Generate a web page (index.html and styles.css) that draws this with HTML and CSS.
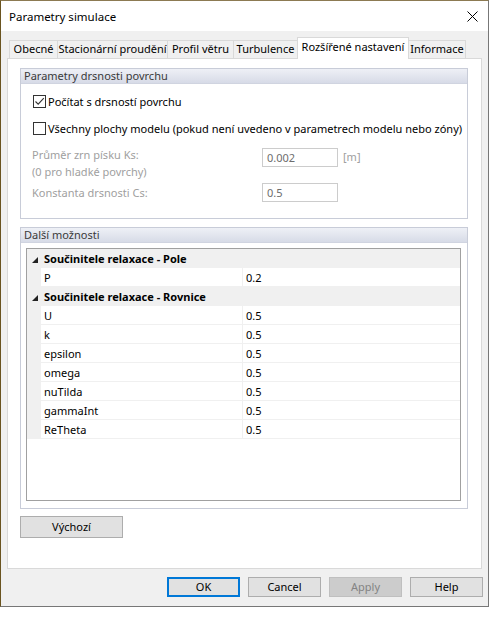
FILE: index.html
```html
<!DOCTYPE html>
<html lang="cs">
<head>
<meta charset="utf-8">
<title>Parametry simulace</title>
<link rel="stylesheet" href="styles.css">
</head>
<body>
<div class="window">
  <div class="titlebar">
    <span class="title">Parametry simulace</span>
    <svg class="close" width="11" height="11" viewBox="0 0 11 11"><path d="M0.5 0.5 L10.5 10.5 M10.5 0.5 L0.5 10.5" stroke="#000" stroke-width="1" fill="none"/></svg>
  </div>
  <div class="client">
    <div class="tabs">
      <div class="tab t1">Obecné</div>
      <div class="tab t2">Stacionární proudění</div>
      <div class="tab t3">Profil větru</div>
      <div class="tab t4">Turbulence</div>
      <div class="tab t5 active">Rozšířené nastavení</div>
      <div class="tab t6">Informace</div>
    </div>
    <div class="panel">
      <div class="group g1">
        <div class="group-head">Parametry drsnosti povrchu</div>
        <div class="group-body g1-body">
          <div class="check-row cb1">
            <span class="checkbox"><svg width="11" height="11" viewBox="0 0 11 11"><path d="M1.5 5.5 L4.2 8.2 L9.8 2.2" stroke="#333" stroke-width="1.1" fill="none"/></svg></span>
            <span class="check-label">Počítat s drsností povrchu</span>
          </div>
          <div class="check-row cb2">
            <span class="checkbox"></span>
            <span class="check-label">Všechny plochy modelu (pokud není uvedeno v parametrech modelu nebo zóny)</span>
          </div>
          <div class="field-row fr1">
            <div class="field-label">Průměr zrn písku Ks:<br>(0 pro hladké povrchy)</div>
            <div class="input">0.002</div>
            <div class="unit">[m]</div>
          </div>
          <div class="field-row fr2">
            <div class="field-label">Konstanta drsnosti Cs:</div>
            <div class="input">0.5</div>
          </div>
        </div>
      </div>
      <div class="group g2">
        <div class="group-head">Další možnosti</div>
        <div class="group-body g2-body">
          <div class="grid">
            <div class="cat"><span class="tri"></span><span class="cat-name">Součinitele relaxace - Pole</span></div>
            <div class="row"><span class="gutter"></span><span class="name">P</span><span class="val">0.2</span></div>
            <div class="cat"><span class="tri"></span><span class="cat-name">Součinitele relaxace - Rovnice</span></div>
            <div class="row"><span class="gutter"></span><span class="name">U</span><span class="val">0.5</span></div>
            <div class="row"><span class="gutter"></span><span class="name">k</span><span class="val">0.5</span></div>
            <div class="row"><span class="gutter"></span><span class="name">epsilon</span><span class="val">0.5</span></div>
            <div class="row"><span class="gutter"></span><span class="name">omega</span><span class="val">0.5</span></div>
            <div class="row"><span class="gutter"></span><span class="name">nuTilda</span><span class="val">0.5</span></div>
            <div class="row"><span class="gutter"></span><span class="name">gammaInt</span><span class="val">0.5</span></div>
            <div class="row"><span class="gutter"></span><span class="name">ReTheta</span><span class="val">0.5</span></div>
          </div>
        </div>
      </div>
      <div class="btn default-btn">Výchozí</div>
    </div>
    <div class="buttons">
      <div class="btn dlg ok">OK</div>
      <div class="btn dlg">Cancel</div>
      <div class="btn dlg disabled">Apply</div>
      <div class="btn dlg">Help</div>
    </div>
  </div>
</div>
</body>
</html>
```
FILE: styles.css
```css
* { box-sizing: border-box; }
body {
  margin: 0;
  background: #ffffff;
  font-family: "Noto Sans", "Open Sans", sans-serif;
  font-size: 11px;
  color: #000;
}
.window {
  width: 489px;
  height: 607px;
  border: 1px solid #777777;
  border-left-color: #6a5420;
  border-top-color: #8c7a52;
  display: flex;
  flex-direction: column;
}
.titlebar {
  height: 30px;
  background: #ffffff;
  display: flex;
  align-items: center;
  justify-content: space-between;
  padding: 0 10px 0 8px;
}
.title { font-size: 11.5px; position: relative; top: 0; }
.client {
  flex: 1;
  background: #f0f0f0;
  padding: 6px 6px 8px 6px;
  display: flex;
  flex-direction: column;
}
.tabs {
  height: 21px;
  display: flex;
  align-items: flex-end;
  padding-left: 2px;
}
.tab {
  height: 18px;
  border: 1px solid #d9d9d9;
  border-bottom: none;
  background: #f0f0f0;
  text-align: center;
  line-height: 16px;
  margin-left: -1px;
  white-space: nowrap;
  flex-shrink: 0;
}
.tab.t1 { margin-left: 0; width: 49px; }
.t2 { width: 111px; }
.t3 { width: 67px; }
.t4 { width: 65px; }
.t5 { width: 112px; }
.t6 { width: 58px; }
.tab.active {
  height: 22px;
  background: #ffffff;
  margin-bottom: -1px;
  position: relative;
  z-index: 1;
  line-height: 17px;
}
.panel {
  height: 511px;
  background: #ffffff;
  border: 1px solid #d9d9d9;
  padding: 9px 13px 0 12px;
  display: flex;
  flex-direction: column;
}
.group {
  border: 1px solid #c8ccd8;
  display: flex;
  flex-direction: column;
}
.g1 { height: 151px; }
.g2 { height: 282px; margin-top: 8px; }
.group-head {
  height: 15px;
  background: linear-gradient(#eef0f6, #d7dbe7);
  border-bottom: 1px solid #d0d4e0;
  color: #3a3a3a;
  line-height: 14px;
  padding-left: 3px;
}
.group-body { flex: 1; }
.g1-body { padding: 10px 0 0 11px; }
.check-row {
  display: flex;
  align-items: center;
  height: 14px;
}
.cb2 { margin-top: 13px; }
.checkbox {
  flex-shrink: 0;
  width: 13px;
  height: 13px;
  border: 1px solid #333333;
  background: #fff;
  display: flex;
  align-items: center;
  justify-content: center;
  margin-left: 1px;
  margin-right: 2px;
}
.check-label { white-space: nowrap; }
.field-row {
  display: flex;
  align-items: flex-start;
  color: #a0a0a0;
}
.fr1 { margin-top: 11px; }
.fr2 { margin-top: 3px; }
.field-label {
  width: 230px;
  line-height: 17px;
}
.fr2 .field-label { padding-top: 1px; }
.input {
  width: 76px;
  height: 19px;
  border: 1px solid #cccccc;
  background: #fff;
  color: #6d6d6d;
  line-height: 17px;
  padding-left: 4px;
}
.fr1 .input { margin-top: 2px; }
.unit {
  margin-left: 5px;
  margin-top: 2px;
  line-height: 17px;
}
.g2-body { padding: 5px 6px 7px 5px; }
.grid {
  height: 253px;
  border: 1px solid #a0a0a0;
  background: #fff;
}
.cat {
  height: 19px;
  background: #f0f0f0;
  display: flex;
  align-items: center;
}
.tri {
  width: 0;
  height: 0;
  border-style: solid;
  border-width: 0 0 6px 6px;
  border-color: transparent transparent #222 transparent;
  margin-left: 5px;
  margin-right: 6px;
  position: relative;
  top: 1px;
}
.cat-name { font-weight: bold; }
.row {
  height: 19px;
  display: flex;
  border-bottom: 1px solid #f0f0f0;
}
.gutter {
  width: 14px;
  background: #f0f0f0;
}
.name {
  width: 202px;
  padding-left: 3px;
  line-height: 19px;
  border-right: 1px solid #f0f0f0;
}
.val {
  flex: 1;
  padding-left: 3px;
  line-height: 19px;
}
.btn {
  background: #e1e1e1;
  border: 1px solid #adadad;
  text-align: center;
}
.default-btn {
  width: 103px;
  height: 22px;
  line-height: 20px;
  margin-top: 7px;
}
.buttons {
  display: flex;
  justify-content: flex-end;
  gap: 8px;
  margin-top: 8px;
  margin-right: -1px;
}
.dlg {
  width: 73px;
  height: 20px;
  line-height: 18px;
}
.ok {
  border: 2px solid #0078d7;
  line-height: 16px;
}
.disabled {
  background: #cccccc;
  border-color: #bfbfbf;
  color: #838383;
}
```
